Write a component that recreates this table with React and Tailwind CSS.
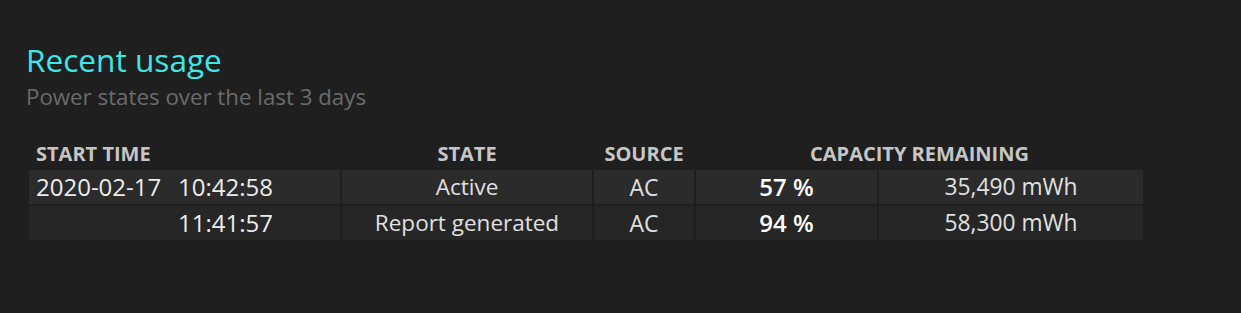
const rows = [
  { date: "2020-02-17", time: "10:42:58", state: "Active", source: "AC", pct: "57 %", mwh: "35,490 mWh", bg: "bg-[#2b2b2b]" },
  { date: "", time: "11:41:57", state: "Report generated", source: "AC", pct: "94 %", mwh: "58,300 mWh", bg: "bg-[#262626]" },
];

const App = () => {
  return (
    <div
      className="w-[1241px] h-[313px] bg-[#1f1f1f] pl-[26px] pt-[40px]"
      style={{ fontFamily: '"Open Sans", "Noto Sans", sans-serif' }}
    >
      <h2 className="text-[31.6px] leading-[39px] text-[#3ee6e6]">Recent usage</h2>
      <p className="text-[22.3px] leading-[35px] text-[#6b6b6b]">Power states over the last 3 days</p>

      <div className="mt-[26px] ml-[3px] grid grid-cols-[311px_250px_100px_181px_264px] gap-[2px]">
        <div className="h-[28px] flex items-center px-[7px] text-[20px] font-bold text-[#c6c6c6]">START TIME</div>
        <div className="h-[28px] flex items-center justify-center text-[20px] font-bold text-[#c6c6c6]">STATE</div>
        <div className="h-[28px] flex items-center justify-center text-[20px] font-bold text-[#c6c6c6]">SOURCE</div>
        <div className="col-span-2 h-[28px] flex items-center justify-center text-[20px] font-bold text-[#c6c6c6]">CAPACITY REMAINING</div>

        {rows.map((r) => (
          <div key={r.time} className="contents">
            <div className={`${r.bg} h-[34px] flex items-center px-[7px] text-[24px] text-[#ececec] whitespace-nowrap`}>
              <span className="w-[142px]">{r.date}</span>
              <span>{r.time}</span>
            </div>
            <div className={`${r.bg} h-[34px] flex items-center justify-center text-[22.5px] text-[#e0e0e0]`}>{r.state}</div>
            <div className={`${r.bg} h-[34px] flex items-center justify-center text-[23px] text-[#e0e0e0]`}>{r.source}</div>
            <div className={`${r.bg} h-[34px] flex items-center justify-center text-[24px] font-semibold text-white`}>{r.pct}</div>
            <div className={`${r.bg} h-[34px] flex items-center justify-center text-[22.8px] text-[#e0e0e0]`}>{r.mwh}</div>
          </div>
        ))}
      </div>
    </div>
  );
};

export default App;
